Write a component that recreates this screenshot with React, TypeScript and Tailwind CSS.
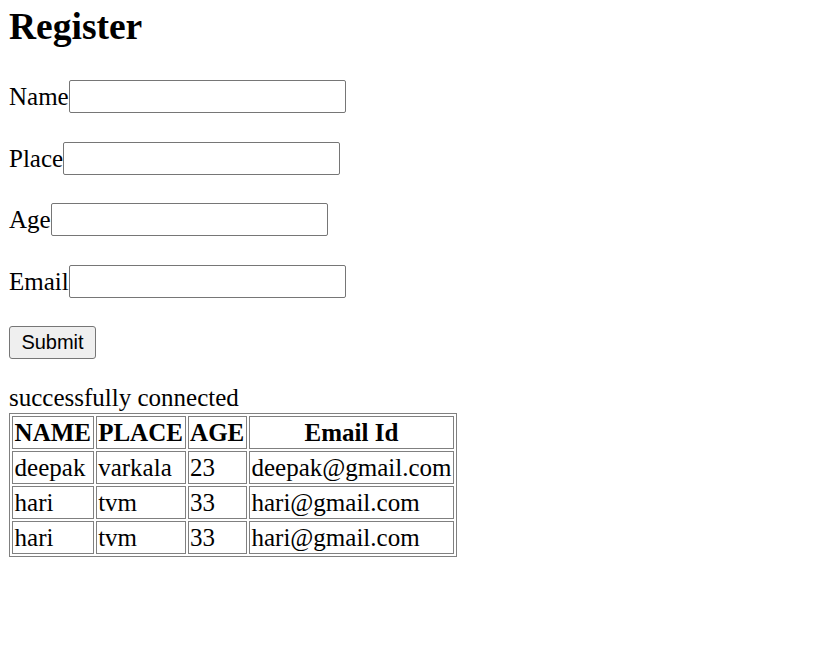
import React from "react";

const rows = [
  ["deepak", "varkala", "23", "deepak@gmail.com"],
  ["hari", "tvm", "33", "hari@gmail.com"],
  ["hari", "tvm", "33", "hari@gmail.com"],
];

function Field({ label, mt }: { label: string; mt: string }) {
  return (
    <div className={`flex items-end h-[33px] ${mt}`}>
      <span className="text-[25px] leading-[33px] whitespace-nowrap">{label}</span>
      <input
        type="text"
        className="w-[277px] h-[33px] border border-[#767676] rounded-[2px] bg-white outline-none"
      />
    </div>
  );
}

export default function App() {
  return (
    <div className="min-h-[662px] bg-white text-black px-[9px] pt-[5px] font-['Liberation_Serif','Times_New_Roman',serif]">
      <h2 className="text-[37.5px] leading-[43px] font-bold">Register</h2>
      <Field label="Name" mt="mt-[32px]" />
      <Field label="Place" mt="mt-[29px]" />
      <Field label="Age" mt="mt-[28px]" />
      <Field label="Email" mt="mt-[29px]" />
      <div className="mt-[28px]">
        <button
          type="button"
          className="flex items-center justify-center w-[87px] h-[33px] pb-[1px] bg-[#efefef] border border-[#767676] rounded-[3px] text-[20px] leading-[23px] font-['Liberation_Sans',Arial,sans-serif] text-black"
        >
          Submit
        </button>
      </div>
      <div className="mt-[24px] text-[25px] leading-[29px]">successfully connected</div>
      <table className="mt-[1px] border border-[#808080] border-separate border-spacing-[2px] text-[25px] leading-[29px]">
        <thead>
          <tr>
            {["NAME", "PLACE", "AGE", "Email Id"].map((h) => (
              <th key={h} className="border border-[#808080] px-[1.6px] py-[1px] font-bold text-center whitespace-nowrap">
                {h}
              </th>
            ))}
          </tr>
        </thead>
        <tbody>
          {rows.map((r, i) => (
            <tr key={i}>
              {r.map((c, j) => (
                <td key={j} className="border border-[#808080] px-[1.6px] py-[1px] text-left whitespace-nowrap">
                  {c}
                </td>
              ))}
            </tr>
          ))}
        </tbody>
      </table>
    </div>
  );
}
